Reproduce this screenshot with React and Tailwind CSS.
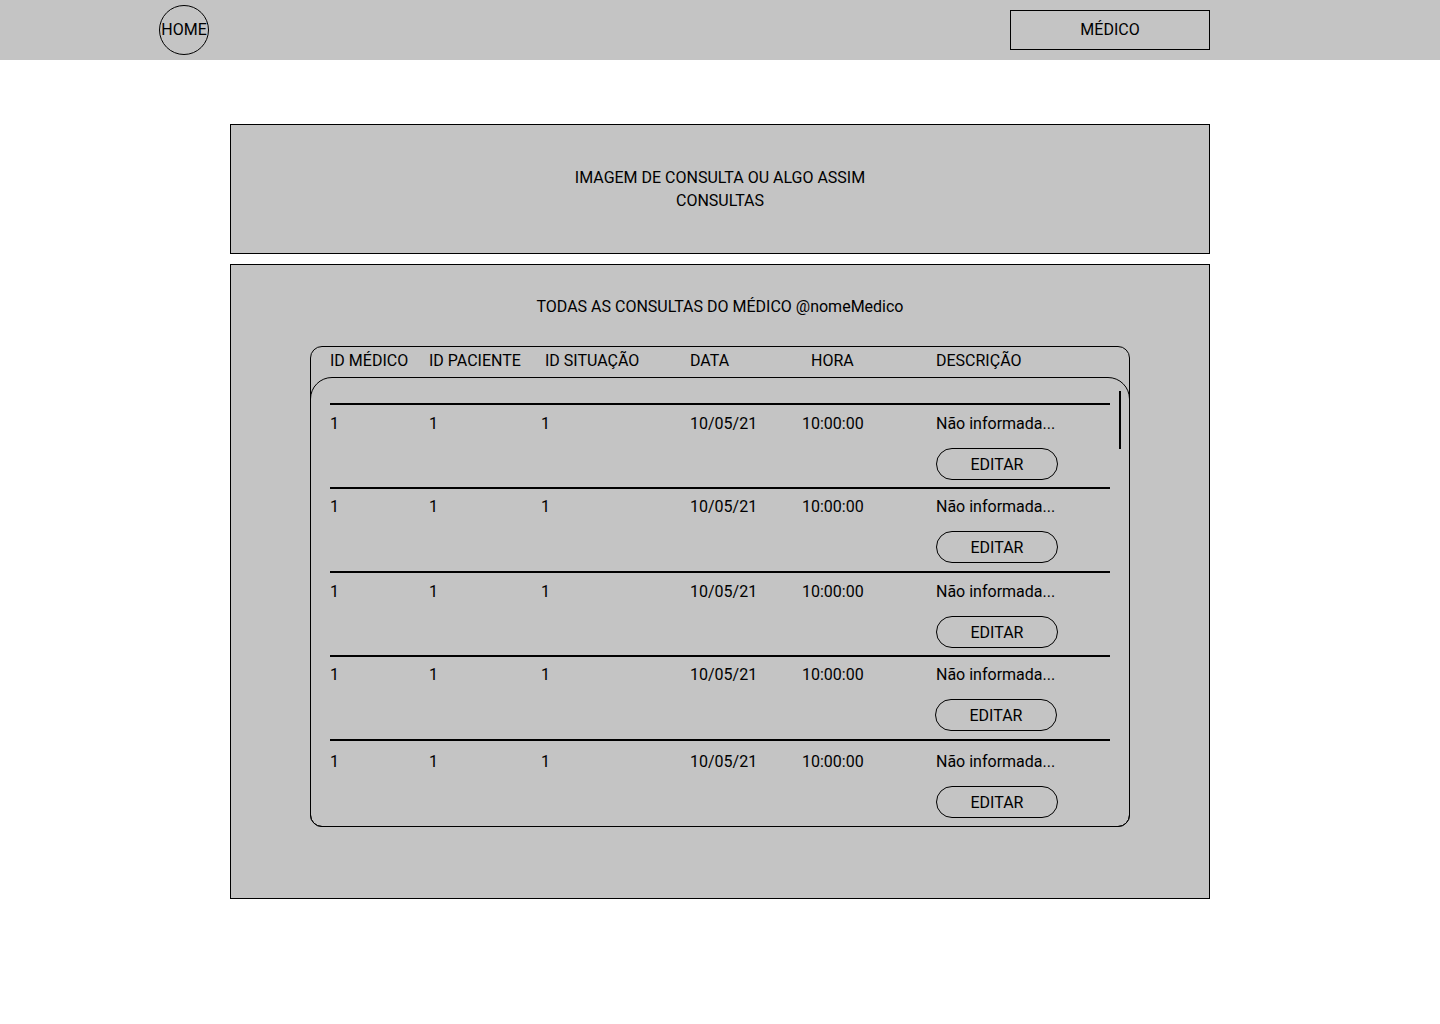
import React from 'react';

// Wireframe: lista de consultas do médico
const headCols = [
  { label: 'ID MÉDICO', w: 'w-[99px]' },
  { label: 'ID PACIENTE', w: 'w-[116px]' },
  { label: 'ID SITUAÇÃO', w: 'w-[145px]' },
  { label: 'DATA', w: 'w-[121px]' },
  { label: 'HORA', w: 'w-[125px]' },
  { label: 'DESCRIÇÃO', w: 'w-[150px]' },
];

const rowWidths = ['w-[99px]', 'w-[112px]', 'w-[149px]', 'w-[112px]', 'w-[134px]'];

const rows = [
  { pt: 'pt-[9px]', pb: 'pb-[7px]', shift: '' },
  { pt: 'pt-[8px]', pb: 'pb-[8px]', shift: '' },
  { pt: 'pt-[9px]', pb: 'pb-[7px]', shift: '' },
  { pt: 'pt-[8px]', pb: 'pb-[8px]', shift: '-ml-px' },
  { pt: 'pt-[11px]', pb: 'pb-[7px]', shift: '' },
];

function Row({ pt, pb, shift }) {
  const values = ['1', '1', '1', '10/05/21', '10:00:00'];
  return (
    <div className={`border-t-2 border-black ${pt} ${pb}`}>
      <div className="flex leading-[19px]">
        {values.map((v, i) => (
          <span key={i} className={rowWidths[i]}>
            {v}
          </span>
        ))}
        <span>Não informada...</span>
      </div>
      <div className="mt-[15px] flex">
        <div className="w-[606px]" />
        <button
          className={`h-8 w-[122px] rounded-full border border-black text-center leading-[31px] ${shift}`}
        >
          EDITAR
        </button>
      </div>
    </div>
  );
}

export default function App() {
  return (
    <div className="min-h-[1024px] bg-white text-base text-black [font-family:Roboto,'Noto_Sans',sans-serif]">
      <header className="flex h-[60px] items-center justify-between bg-[#c4c4c4] pl-[159px] pr-[230px]">
        <div className="flex h-[50px] w-[50px] items-center justify-center rounded-full border border-black">
          HOME
        </div>
        <div className="flex h-10 w-[200px] items-center justify-center border border-black">MÉDICO</div>
      </header>

      <main className="mx-auto mt-16 w-[980px]">
        <section className="flex h-[130px] flex-col items-center justify-center border border-black bg-[#c4c4c4] leading-[23px]">
          <p>IMAGEM DE CONSULTA OU ALGO ASSIM</p>
          <p>CONSULTAS</p>
        </section>

        <section className="mt-[10px] h-[635px] border border-black bg-[#c4c4c4] pt-[32px]">
          <h2 className="text-center leading-[19px]">TODAS AS CONSULTAS DO MÉDICO @nomeMedico</h2>

          <div className="mx-auto mt-[30px] w-[820px] rounded-[12px] border border-black">
            <div className="flex h-[30px] items-start pl-[19px] pt-[4px] leading-[19px]">
              {headCols.map((c) => (
                <span key={c.label} className={c.w}>
                  {c.label}
                </span>
              ))}
            </div>
            <div className="relative -mx-px -mb-px h-[450px] rounded-t-[22px] rounded-b-[12px] border border-black px-[19px] pt-[25px]">
              <div className="absolute left-[808px] top-[13px] h-[58px] w-[2px] bg-black" />
              {rows.map((r, i) => (
                <Row key={i} {...r} />
              ))}
            </div>
          </div>
        </section>
      </main>
    </div>
  );
}
